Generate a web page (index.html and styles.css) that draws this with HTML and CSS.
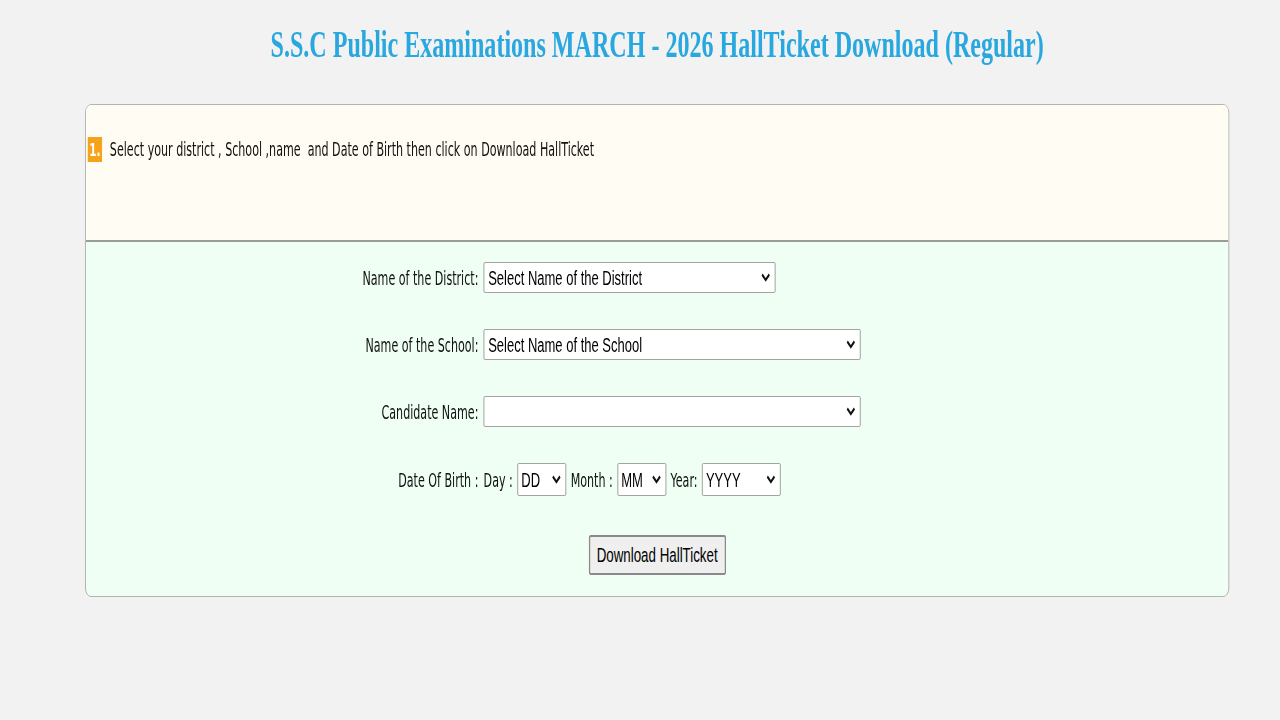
FILE: index.html
```html
<!DOCTYPE html>
<html>
<head>
<meta charset="utf-8">
<title>SSC Hall Ticket</title>
<link rel="stylesheet" href="styles.css">
</head>
<body>
<div class="page">
  <div class="wrap">
    <h1 class="title">S.S.C Public Examinations MARCH - 2026 HallTicket Download (Regular)</h1>
    <div class="box">
      <div class="info">
        <span class="badge">1.</span>
        <span class="info-text">Select your district , School ,name&nbsp; and Date of Birth then click on Download HallTicket</span>
      </div>
      <div class="form">
        <div class="grid">
          <label class="lbl">Name of the District:</label>
          <div class="cell"><select class="sel sel-district"><option>Select Name of the District</option></select></div>
          <label class="lbl">Name of the School:</label>
          <div class="cell"><select class="sel sel-wide"><option>Select Name of the School</option></select></div>
          <label class="lbl">Candidate Name:</label>
          <div class="cell"><select class="sel sel-wide"><option></option></select></div>
          <label class="lbl">Date Of Birth :</label>
          <div class="cell dob">
            <span class="dlbl">Day :</span>
            <select class="sel sel-small"><option>DD</option></select>
            <span class="dlbl">Month :</span>
            <select class="sel sel-small"><option>MM</option></select>
            <span class="dlbl">Year:</span>
            <select class="sel sel-year"><option>YYYY</option></select>
          </div>
        </div>
        <div class="actions">
          <button class="btn" type="button">Download HallTicket</button>
        </div>
      </div>
    </div>
  </div>
</div>
</body>
</html>
```

FILE: styles.css
```css
html, body {
  margin: 0;
  padding: 0;
  background: #f2f2f2;
  overflow: hidden;
  width: 1280px;
  height: 720px;
}
.page {
  width: 1966px;
  height: 720px;
  transform: scaleX(0.65);
  transform-origin: 0 0;
}
.wrap {
  margin-left: 131px;
  width: 1760px;
}
.title {
  margin: 23px 0 0 0;
  height: 44px;
  line-height: 44px;
  text-align: center;
  font-family: "Liberation Serif", "Times New Roman", serif;
  font-weight: bold;
  font-size: 37px;
  color: #29a7df;
}
.box {
  margin-top: 37px;
  border: 1px solid #a4a6a4;
  border-radius: 9px;
  overflow: hidden;
  background: #f0fff4;
}
.info {
  background: #fffcf3;
  height: 137px;
  padding-top: 32px;
  padding-left: 3px;
  box-sizing: border-box;
  display: flex;
  align-items: flex-start;
  border-bottom: 2px solid #9a9c9a;
}
.badge {
  display: inline-block;
  width: 22px;
  height: 25px;
  line-height: 25px;
  background: #f7a21b;
  color: #fff;
  font-family: "DejaVu Sans Condensed", "DejaVu Sans", sans-serif;
  font-stretch: condensed;
  font-weight: bold;
  font-size: 18px;
  text-align: center;
}
.info-text {
  margin-left: 12px;
  line-height: 25px;
  font-family: "DejaVu Sans Condensed", "DejaVu Sans", sans-serif;
  font-stretch: condensed;
  font-size: 19px;
  color: #111;
}
.form {
  padding: 20px 0 21px 0;
}
.grid {
  display: grid;
  grid-template-columns: 604px auto;
  column-gap: 8px;
  row-gap: 36px;
  align-items: center;
  justify-items: start;
}
.lbl {
  justify-self: end;
  font-family: "DejaVu Sans Condensed", "DejaVu Sans", sans-serif;
  font-stretch: condensed;
  font-size: 19px;
  color: #111;
}
.cell {
  display: flex;
  align-items: center;
}
.dob {
  gap: 7px;
}
.dlbl {
  font-family: "DejaVu Sans Condensed", "DejaVu Sans", sans-serif;
  font-stretch: condensed;
  font-size: 19px;
  color: #111;
}
.sel {
  -webkit-appearance: none;
  appearance: none;
  height: 31px;
  font-family: "Liberation Sans", Arial, sans-serif;
  font-size: 20px;
  color: #000;
  background-color: #fff;
  background-image: url("data:image/svg+xml;utf8,<svg xmlns='http://www.w3.org/2000/svg' width='14' height='9' viewBox='0 0 14 9'><path d='M1.5 1.5 L7 7 L12.5 1.5' fill='none' stroke='%23111' stroke-width='2.6'/></svg>");
  background-repeat: no-repeat;
  background-position: right 7px center;
  background-size: 14px 9px;
  border: 1px solid #8f8f8f;
  border-radius: 2px;
  padding: 0 26px 0 6px;
  margin: 0;
}
.sel-district { width: 449px; }
.sel-wide { width: 580px; }
.sel-small { width: 75px; height: 33px; padding-left: 5px; }
.sel-year { width: 121px; height: 33px; padding-left: 5px; }
.actions {
  margin-top: 39px;
  display: flex;
  justify-content: center;
}
.btn {
  width: 211px;
  height: 40px;
  font-family: "Liberation Sans", Arial, sans-serif;
  font-size: 20.5px;
  color: #000;
  background: #efefef;
  border: 2px solid #8a8a8a;
  border-radius: 3px;
  padding: 0;
}
```
